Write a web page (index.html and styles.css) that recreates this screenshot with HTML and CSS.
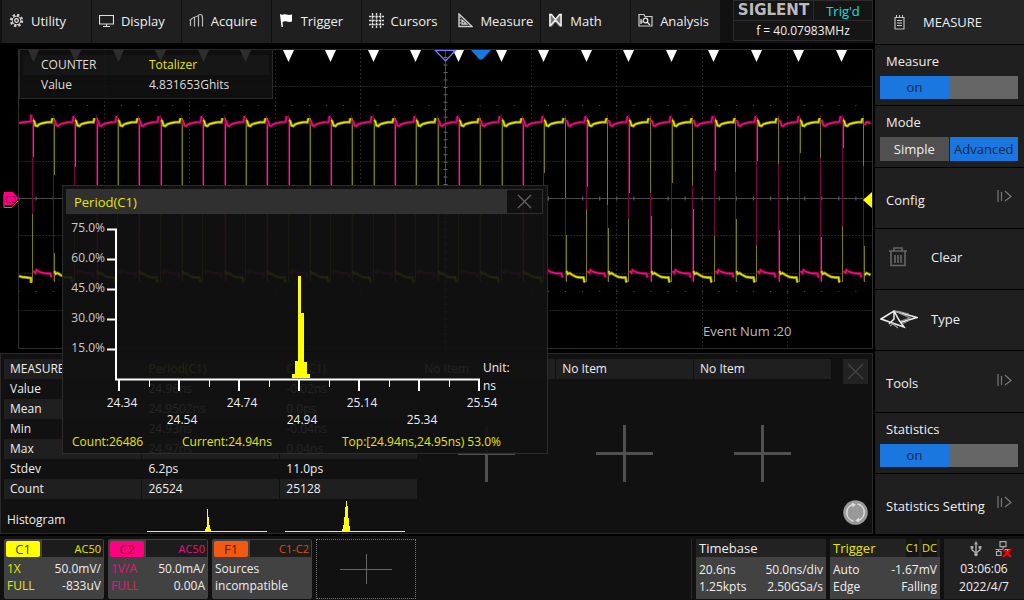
FILE: index.html
```html
<!DOCTYPE html>
<html lang="en">
<head>
<meta charset="utf-8">
<title>Oscilloscope – Measure</title>
<link rel="stylesheet" href="styles.css">
</head>
<body>
<div class="app">
  <div class="main">
    <div class="work">
      <header class="topbar">
        <nav class="menu">
          <button class="menu-item"><svg class="icon" viewBox="0 0 15 15"><circle cx="7.500" cy="7.500" r="5.500" fill="none" stroke="#ccc" stroke-width="2.400" stroke-dasharray="2.300 2"/><circle cx="7.500" cy="7.500" r="4.300" fill="none" stroke="#ddd"/><circle cx="7.500" cy="7.500" r="1.800" fill="none" stroke="#eee" stroke-width="1.200"/></svg>Utility</button>
          <button class="menu-item"><svg class="icon" viewBox="0 0 15 15"><path d="M.5 2.500h14v8.500H.5zM7.500 11v2.500M4 13.500h7" fill="none" stroke="#ddd" stroke-width="1.200"/></svg>Display</button>
          <button class="menu-item"><svg class="icon" viewBox="0 0 15 15"><path d="M.5 7C3 7 3 4 6 4 9 4 9 1.500 11.500 1.500 13.500 1.500 13.500 3 13.500 5M1.500 7v6M5.500 4.500v9M9.500 3v10.500M13.500 4v9.500" fill="none" stroke="#bbb" stroke-width="1.200"/></svg>Acquire</button>
          <button class="menu-item"><svg class="icon" viewBox="0 0 15 15"><path d="M1 1.500l1-.5 1 1c3-2 5 1 10-.5v7C9 10 6 7 3.500 9l.5 5H2.500z" fill="#fff"/></svg>Trigger</button>
          <button class="menu-item"><svg class="icon" viewBox="0 0 15 15"><path d="M3.500 0v15M7.500 0v15M11.500 0v15M0 3.500h15M0 7.500h15M0 11.500h15" stroke="#ddd" stroke-width="1.300" stroke-dasharray="2.500 .7"/></svg>Cursors</button>
          <button class="menu-item"><svg class="icon" viewBox="0 0 15 15"><path d="M1 1v12.500h13zM4 7v4h4.500z" fill="none" stroke="#ccc" stroke-width="1.400"/><path d="M1 4h2M1 7h2M1 10h2" stroke="#ccc"/></svg>Measure</button>
          <button class="menu-item"><svg class="icon" viewBox="0 0 15 15"><path d="M1 1.500h3l3.500 4 3.500-4h3v12h-3L7.500 9 4 13.500H1z" fill="#777"/><path d="M1 1.500h2.500l4 5 4-5H14M2 2v11.500M13 2v11.500M2 13l5.500-6L13 13" fill="none" stroke="#eee" stroke-width="1.500"/></svg>Math</button>
          <button class="menu-item"><svg class="icon" viewBox="0 0 15 15"><path d="M1 13V1.500h5l1 2h7V13z" fill="none" stroke="#ccc" stroke-width="1.200"/><circle cx="7.500" cy="7.500" r="2.300" fill="none" stroke="#eee" stroke-width="1.200"/><path d="M9 9l3 3M3 9h2M3 6v5" stroke="#eee" stroke-width="1.200"/></svg>Analysis</button>
        </nav>
        <div class="status">
          <span class="brand">SIGLENT</span>
          <span class="trig-state">Trig'd</span>
          <span class="freq">f = 40.07983MHz</span>
        </div>
      </header>

      <section class="scope">
        <svg class="plot" viewBox="0 43 873 310" preserveAspectRatio="none">
          <g id="grid"></g>
          <g id="trace" fill="none"></g>
          <g id="events" fill="#fff"></g>
          <path d="M435.500 50.500h20l-10 10.500z" fill="none" stroke="#8080ff" stroke-width="1.200"/>
          <path d="M471 50h20l-8 9q-2 1.500-4 0z" fill="#1a77e0"/>
          <path d="M4 194v13.500h8l6-6.500" fill="none" stroke="#f06020"/>
          <path d="M4 192h9l5.500 6.500-6 6.500H4z" fill="#ff0080"/>
          <text x="5" y="203" class="chan-tag">C2</text>
          <path d="M863 200l9-8v16z" fill="#ffff00"/>
          <text x="703" y="336" class="event-count">Event Num :20</text>
        </svg>

        <dl class="counter">
          <div class="counter-row"><dt>COUNTER</dt><dd class="yellow">Totalizer</dd></div>
          <div class="counter-row"><dt>Value</dt><dd>4.831653Ghits</dd></div>
        </dl>

        <div class="popup">
          <div class="popup-head">
            <h2 class="popup-title">Period(C1)</h2>
            <button class="popup-close" aria-label="Close"><svg width="15" height="15" viewBox="0 0 15 15"><path d="M1 1l13 13M14 1L1 14" stroke="#666" stroke-width="1.200"/></svg></button>
          </div>
          <svg class="chart" viewBox="63 214 484 239">
            <path d="M107 229.500h10M107 259.500h10M107 289.500h10M107 319.500h10M107 349.500h10M116 229v151M115 379.500h365" stroke="#fff" stroke-width="2" fill="none"/>
            <path d="M119 380v11M179 380v11M239 380v11M299 380v11M359 380v11M419 380v11M479 380v11" stroke="#fff" stroke-width="2"/>
            <path d="M149.500 380v7M209.500 380v7M269.500 380v7M329.500 380v7M389.500 380v7M449.500 380v7" stroke="#fff"/>
            <path d="M292 378v-4h3v-13h3v-85h3v37h3v49h3v12h3v4z" fill="#ffff00"/>
            <g class="axis-y"><text x="105" y="232">75.0%</text><text x="105" y="262">60.0%</text><text x="105" y="292">45.0%</text><text x="105" y="322">30.0%</text><text x="105" y="352">15.0%</text></g>
            <g class="axis-x"><text x="122" y="407">24.34</text><text x="182" y="424">24.54</text><text x="242" y="407">24.74</text><text x="302" y="424">24.94</text><text x="362" y="407">25.14</text><text x="422" y="424">25.34</text><text x="482" y="407">25.54</text></g>
            <g class="unit"><text x="483" y="372">Unit:</text><text x="483" y="390">ns</text></g>
            <g class="summary"><text x="72" y="446">Count:26486</text><text x="182" y="446">Current:24.94ns</text><text x="342" y="446">Top:[24.94ns,24.95ns) 53.0%</text></g>
          </svg>
        </div>
      </section>

      <section class="panel">
        <table class="results">
          <thead>
            <tr><th>MEASURE</th><th class="yellow">Period(C1)</th><th class="yellow">CCJ(C1)</th><th>No Item</th><th>No Item</th><th>No Item</th></tr>
          </thead>
          <tbody>
            <tr><th>Value</th><td>24.96ns</td><td>-0.02ns</td>
              <td class="slot" rowspan="7"><button class="add" aria-label="Add item"></button></td>
              <td class="slot" rowspan="7"><button class="add" aria-label="Add item"></button></td>
              <td class="slot" rowspan="7"><button class="add" aria-label="Add item"></button></td></tr>
            <tr class="shade"><th>Mean</th><td>24.9502ns</td><td>0.0ps</td></tr>
            <tr><th>Min</th><td>24.93ns</td><td>-0.04ns</td></tr>
            <tr class="shade"><th>Max</th><td>24.97ns</td><td>0.04ns</td></tr>
            <tr><th>Stdev</th><td>6.2ps</td><td>11.0ps</td></tr>
            <tr class="shade"><th>Count</th><td>26524</td><td>25128</td></tr>
            <tr class="histo"><th>Histogram</th>
              <td><svg class="spark" viewBox="0 0 120 32"><path d="M0 31h120v1H0z"/><path d="M58 31v-2h1v-2h1V9h1v8h1v8h1v4h1v2z"/></svg></td>
              <td><svg class="spark" viewBox="0 0 120 32"><path d="M0 31h120v1H0z"/><path d="M57 31v-2h1v-4h1v-8h1V7h1V1h1v5h1v12h1v8h1v5z"/></svg></td></tr>
          </tbody>
        </table>
        <div class="panel-tools">
          <button class="panel-close" aria-label="Close panel"><svg width="17" height="17" viewBox="0 0 17 17"><path d="M1 1l15 15M16 1L1 16" stroke="#444" stroke-width="1.400"/></svg></button>
          <button class="refresh" aria-label="Restart statistics"><svg width="25" height="25" viewBox="0 0 25 25"><circle cx="12.500" cy="12.500" r="12.300" fill="#999"/><path d="M10 4.500a8.500 8.500 0 0 0 .5 16.500M15 20.500A8.500 8.500 0 0 0 14.500 4" fill="none" stroke="#ddd" stroke-width="1.500"/><path d="M9 2.500l4 2-3.500 3zM16 17.500l-3.500 3 3.500 2z" fill="#ddd"/></svg></button>
        </div>
      </section>
    </div>

    <aside class="side">
      <h1 class="side-title"><svg width="11" height="15" viewBox="0 0 11 15"><path d="M1 2.500h9v11.500H1z" fill="none" stroke="#bbb" stroke-width="1.200"/><path d="M3 5.500h5M3 8h5M3 10.500h5M2.500 0v3M5.500 0v3M8.500 0v3" stroke="#ccc"/></svg>MEASURE</h1>
      <div class="side-item stack"><span id="lbl-measure">Measure</span><button class="switch" role="switch" aria-checked="true" aria-labelledby="lbl-measure"><span class="switch-on">on</span></button></div>
      <div class="side-item stack"><span>Mode</span><div class="modes"><button class="mode">Simple</button><button class="mode active">Advanced</button></div></div>
      <button class="side-item link">Config<svg width="15" height="13" viewBox="0 0 15 13"><path d="M1 0v12M4.500 2v9M8 1l6 5.500L8 11" fill="none" stroke="#777" stroke-width="1.200"/></svg></button>
      <button class="side-item pic"><svg width="38" height="20" viewBox="0 0 38 20"><path d="M9 4h18M14 3.500V1h8v2.500M11 4v14.500h14V4M15 8v8M18 8v8M21 8v8" fill="none" stroke="#666" stroke-width="1.600"/></svg>Clear</button>
      <button class="side-item pic"><svg width="38" height="20" viewBox="0 0 38 20"><path d="M1 10L14 2l5 9 5 7zM14 2l23 6.500-17 5M14 2v8l-5 5" fill="none" stroke="#eee" stroke-width="1.500"/><path d="M10 17l3-2 5 4M15 2l15 7-9 3M29 5l-12-3M30 11l-8 4" fill="none" stroke="#999" stroke-width="1.200"/></svg>Type</button>
      <button class="side-item link">Tools<svg width="15" height="13" viewBox="0 0 15 13"><path d="M1 0v12M4.500 2v9M8 1l6 5.500L8 11" fill="none" stroke="#777" stroke-width="1.200"/></svg></button>
      <div class="side-item stack"><span id="lbl-stat">Statistics</span><button class="switch" role="switch" aria-checked="true" aria-labelledby="lbl-stat"><span class="switch-on">on</span></button></div>
      <button class="side-item link">Statistics Setting<svg width="15" height="13" viewBox="0 0 15 13"><path d="M1 0v12M4.500 2v9M8 1l6 5.500L8 11" fill="none" stroke="#777" stroke-width="1.200"/></svg></button>
    </aside>
  </div>

  <footer class="bottom">
    <div class="channels">
      <section class="card c1"><div class="card-head"><span class="badge">C1</span><span class="card-mode">AC50</span></div>
        <div class="card-body"><p><span class="tint">1X</span><span>50.0mV/</span></p><p><span class="tint">FULL</span><span>-833uV</span></p></div></section>
      <section class="card c2"><div class="card-head"><span class="badge">C2</span><span class="card-mode">AC50</span></div>
        <div class="card-body"><p><span class="tint">1V/A</span><span>50.0mA/</span></p><p><span class="tint">FULL</span><span>0.00A</span></p></div></section>
      <section class="card f1"><div class="card-head"><span class="badge">F1</span><span class="card-mode">C1-C2</span></div>
        <div class="card-body"><p>Sources</p><p>incompatible</p></div></section>
      <button class="add-channel" aria-label="Add channel"><svg width="52" height="30" viewBox="0 0 52 30"><path d="M0 15.500h52M26.500 0v30" stroke="#666"/></svg></button>
    </div>
    <div class="infos">
      <section class="info timebase"><h3>Timebase</h3><div class="card-body"><p><span>20.6ns</span><span>50.0ns/div</span></p><p><span>1.25kpts</span><span>2.50GSa/s</span></p></div></section>
      <section class="info trigger"><h3 class="yellow">Trigger<span class="tags"><span>C1</span><span>DC</span></span></h3><div class="card-body"><p><span>Auto</span><span>-1.67mV</span></p><p><span>Edge</span><span>Falling</span></p></div></section>
      <section class="clock">
        <div class="clock-icons">
          <svg width="12" height="16" viewBox="0 0 12 16"><path d="M6 2v11M2 6v3l4 3 4-3V6" fill="none" stroke="#aaa" stroke-width="1.400"/><path d="M6 0l2 3.500H4zM.5 5h3v2.500h-3zM8.500 5h3v2.500h-3z" fill="#aaa"/><circle cx="6" cy="13.500" r="1.800" fill="#aaa"/></svg>
          <svg width="17" height="17" viewBox="0 0 17 17"><path d="M5 .7h6v5H5zM8 6v2.500M.5 8.500h15M3.500 8.500v2M12.500 8.500v2M1.500 10.500h4.500v4H1.500z" fill="none" stroke="#aaa" stroke-width="1.200"/><path d="M8 8l8 8M16 8l-8 8" stroke="#f00" stroke-width="2.200"/></svg>
        </div>
        <p>03:06:06</p><p>2022/4/7</p>
      </section>
    </div>
  </footer>
</div>
<script src="scope.js"></script>
</body>
</html>
```
FILE: styles.css
```css
* { box-sizing: border-box; }
body, h1, h2, h3, p, dl, dd { margin: 0; font-weight: 400; }
body { background: #000; color: #eee; font: 13px/18px "Open Sans", "Noto Sans", sans-serif; }
button { margin: 0; padding: 0; border: 0; background: none; color: inherit; font: inherit; }
svg { display: block; flex: none; }
.yellow { color: #e6e600; }

.app { display: flex; flex-direction: column; min-height: 100vh; }
.main { display: flex; flex: 1; }
.work { display: flex; flex: 1; flex-direction: column; min-width: 0; }

.topbar { display: flex; gap: 13px; background: #111; height: 43px; }
.menu { display: flex; flex: 1; padding-left: 2px; }
.menu-item { display: flex; flex: 1; align-items: center; gap: 7px; padding: 0 0 2px 7px; background: #1f1f1f; border-right: 1px solid #111; }
.menu-item:last-child { border-right: 0; }
.icon { width: 15px; height: 15px; }
.status { display: grid; grid-template: 19px 19px / 79px 1fr; gap: 1px; width: 140px; height: 41px; background: #2a2a2a; border: 1px solid #2a2a2a; text-align: center; }
.status > span { background: #151515; line-height: 20px; }
.status > .brand { color: #bbb; font: bold 15px/19px "DejaVu Sans", sans-serif; }
.trig-state { color: #00e6e6; }
.status > .freq { grid-column: span 2; font-size: 12px; line-height: 20px; }

.scope { position: relative; flex: 1; min-height: 310px; }
.plot { position: absolute; width: 100%; height: 100%; }
.chan-tag { fill: #80004a; font-size: 9px; }
.event-count { fill: #bbb; font-size: 13px; }

.counter { position: absolute; top: 6px; left: 19px; width: 254px; padding: 5px 3px 3px; border: 1px solid #2a2a2a; background: rgba(17, 17, 17, .88); color: #ddd; font-size: 12px; }
.counter-row { display: flex; line-height: 20px; }
.counter-row:first-child { background: rgba(40, 40, 40, .3); }
.counter-row dt { width: 126px; padding-left: 18px; }

.popup { position: absolute; z-index: 1; top: 142px; left: 62px; width: 486px; border: 1px solid #2c2c2c; background: rgba(17, 17, 17, .92); }
.popup-head { display: flex; height: 28px; padding: 3px 4px 0 3px; }
.popup-title { flex: 1; padding-left: 8px; background: #303030; color: #e6e600; font-size: 13px; line-height: 26px; }
.popup-close { display: flex; align-items: center; justify-content: center; width: 37px; border: 1px solid #303030; }
.chart { width: 100%; font-size: 12px; fill: #eee; }
.axis-y { text-anchor: end; fill: #ccc; }
.axis-x { text-anchor: middle; }
.summary { fill: #e6e600; }

.panel { display: flex; padding: 5px 0 0 3px; border: 1px solid #2a2a2a; background: #111; font-size: 12px; }
.results { flex: 1; width: 100%; border-collapse: collapse; table-layout: fixed; }
.results th, .results td { height: 20px; padding: 0 6px; border-right: 1px solid #111; line-height: 20px; text-align: left; font-weight: 400; }
.results thead th, .shade th, .shade td { background: #1f1f1f; }
.results .histo th, .results .histo td { height: 34px; padding: 0 5px; }
.results .histo th { padding: 8px 3px 0; }
.spark { width: 120px; height: 32px; fill: #ffff00; }
.results .slot { text-align: center; }
.add { width: 57px; height: 57px; background: linear-gradient(#505050, #505050) center / 100% 3px no-repeat, linear-gradient(#505050, #505050) center / 3px 100% no-repeat; }
.panel-tools { display: flex; flex-direction: column; align-items: center; justify-content: space-between; width: 40px; padding: 0 0 8px 6px; }
.panel-close { display: flex; align-items: center; justify-content: center; width: 25px; height: 25px; background: #222; }

.side { display: grid; grid-template-rows: auto repeat(8, 1fr); gap: 1px; width: 151px; padding-left: 2px; }
.side-title { display: flex; align-items: center; gap: 18px; height: 44px; padding-left: 19px; background: #252525; font-size: 13px; }
.side-item { display: flex; align-items: center; padding: 0 5px 0 11px; background: #1f1f1f; }
.stack { flex-direction: column; align-items: stretch; justify-content: space-between; padding: 7px 6px 6px 5px; }
.stack > span { padding-left: 6px; }
.switch { display: flex; height: 23px; background: #666; }
.switch-on { width: 50%; background: #1a77e0; color: #12284a; line-height: 23px; }
.modes { display: flex; gap: 1px; }
.mode { flex: 1; height: 24px; background: #505050; }
.mode.active { background: #1a77e0; color: #12284a; }
.link { justify-content: space-between; padding-right: 12px; padding-top: 4px; }
.link svg { margin-bottom: 6px; }
.pic { gap: 13px; padding: 0 0 3px 5px; }

.bottom { display: flex; justify-content: space-between; min-height: 64px; margin-top: 2px; padding: 3px 0 4px 4px; background: #111; }
.channels, .infos { display: flex; gap: 4px; }
.infos { padding-left: 4px; border-left: 1px solid #2a2a2a; }
.card { width: 100px; border: 1px solid #424242; border-radius: 2px; background: #424242; }
.card-head { display: flex; justify-content: space-between; gap: 2px; height: 17px; line-height: 17px; }
.badge { width: 34px; margin: 1px 0 0 1px; border-radius: 2px; background: #ffff00; color: #444400; text-align: center; }
.card-mode { flex: 1; padding-right: 2px; background: #1c1c1c; font-size: 11px; line-height: 18px; text-align: right; }
.card-body { padding: 3px 2px; font-size: 12px; line-height: 17px; }
.info .card-body { padding: 4px 3px; }
.card-body p { display: flex; justify-content: space-between; }
.c1 .tint, .c1 .card-mode { color: #e6e600; }
.c2 .tint, .c2 .card-mode { color: #e6147d; }
.c2 .badge { background: #ff0080; color: #55002b; }
.f1 .badge { background: #f05a14; color: #552005; }
.f1 .card-mode { color: #d65014; }
.add-channel { display: flex; align-items: center; justify-content: center; width: 100px; border: 1px dotted #777; }
.info { width: 110px; background: #424242; }
.timebase { width: 130px; }
.info h3 { display: flex; justify-content: space-between; padding: 0 3px; background: #222; font-size: 13px; line-height: 18px; }
.tags { display: flex; gap: 3px; font-size: 11px; }
.tags span { background: #151515; }
.clock { width: 80px; background: #222; font-size: 12px; line-height: 18px; text-align: center; }
.clock-icons { display: flex; gap: 13px; justify-content: flex-end; height: 21px; padding: 2px 12px 0 0; }
```
FILE: scope.js
```js
const NS = 'http://www.w3.org/2000/svg';
const path = (parent, d, attrs) => {
  const p = document.createElementNS(NS, 'path');
  p.setAttribute('d', d);
  for (const k in attrs) p.setAttribute(k, attrs[k]);
  document.getElementById(parent).appendChild(p);
};

// Graticule: 10 x 8 divisions with a ticked centre cross.
const L = 18.5, T = 49.5, W = 854, H = 299;
for (let i = 1; i < 10; i++) {
  if (i !== 5) path('grid', `M${Math.round(L + i * W / 10) + 0.5} ${T}v${H}`, { stroke: '#484848', 'stroke-dasharray': '1 3' });
}
for (let j = 1; j < 8; j++) {
  if (j !== 4) path('grid', `M${L} ${Math.round(T + j * H / 8) - 0.5}h${W}`, { stroke: '#484848', 'stroke-dasharray': '1 2' });
}
path('grid', `M${L} 105.5h${W}M${L} 291.5h${W}`, { stroke: '#555', 'stroke-dasharray': '1 16.08' });
path('grid', `M${L} 198.500h${W}M445.500 ${T}v${H}`, { stroke: '#484848' });
path('grid', `M${L} 198.500h${W}`, { stroke: '#666', 'stroke-width': 4, 'stroke-dasharray': '1 16.08' });
path('grid', `M445.500 ${T}v${H}`, { stroke: '#666', 'stroke-width': 4, 'stroke-dasharray': '1 6.475' });
path('grid', `M${L} ${T}h${W}v${H}h-${W}z`, { stroke: '#2e2e2e', fill: 'none' });

// Two complementary square waves; each pair is where C1 stops and resumes on an edge.
const cuts = [[157, 214], [175, 253], [167, 225], [190, 190]];
while (cuts.length < 24) cuts.push([190, 200]);
cuts.push([173, 240], [198, 235], [187, 209], [205, 228], [193, 219], [193, 216], [183, 229], [185, 209],
  [171, 236], [172, 219], [161, 245], [164, 230], [153, 235], [158, 237], [148, 226], [166, 246]);
const STEP = 21.31, X0 = 32.3;
let y1 = 'M19 276l3 1 5 .5 4 .5v5', y2 = 'M19 123l6-1 6-.5v-7', y1e = '', y2e = '';
cuts.forEach(([a, b], i) => {
  const x = Math.floor(X0 + i * STEP) + 0.5;
  const full = 870 - x > 15;
  const hi = `M${x + 1} 120l1 2 1 3.500 2 .5 2-2 4-1`;
  const lo = `M${x + 1} 271l1 3 2-1 3 2 4 2`;
  const lo2 = `M${x + 1} 271l2 2 1-3 3 2 4 1`;
  if (i % 2 === 0) {
    y1 += hi + (full ? 'l4-.8 4 0 1-4' : '');
    y2 += lo2 + (full ? 'l4 .5 3 0 1 4' : '');
  } else {
    y1 += full ? lo + 'l4 .5 3 0 1 5' : `M${x + 1} 275l2-2 4 2`;
    y2 += full ? hi + 'l4-.8 4-.2 1-6' : `M${x + 1} 125l2-3 4 1`;
  }
  y2e += `M${x} 115V281`;
  const top = i % 2 ? x : x + 1;
  const low = i % 2 ? x + 1 : x;
  y1e += i < 24 ? `M${x + 1} 118V${a}M${low} ${b}V282` : `M${top} 118V${a}M${low} ${b}V282`;
});
path('trace', y2e, { stroke: '#7d0046', 'stroke-width': 1 });
path('trace', y1e, { stroke: '#7d7d00', 'stroke-width': 1 });
path('trace', y2, { stroke: '#7d0046', 'stroke-width': 3 });
path('trace', y2, { stroke: '#f0107c', 'stroke-width': 1.3 });
path('trace', y1, { stroke: '#7d7d00', 'stroke-width': 3 });
path('trace', y1, { stroke: '#e8e800', 'stroke-width': 1.3 });

for (let i = 0; i < 20; i++) {
  path('events', `M${Math.round(27.500 + i * 42.550)} 50h11l-5.500 12z`, {});
}
```
